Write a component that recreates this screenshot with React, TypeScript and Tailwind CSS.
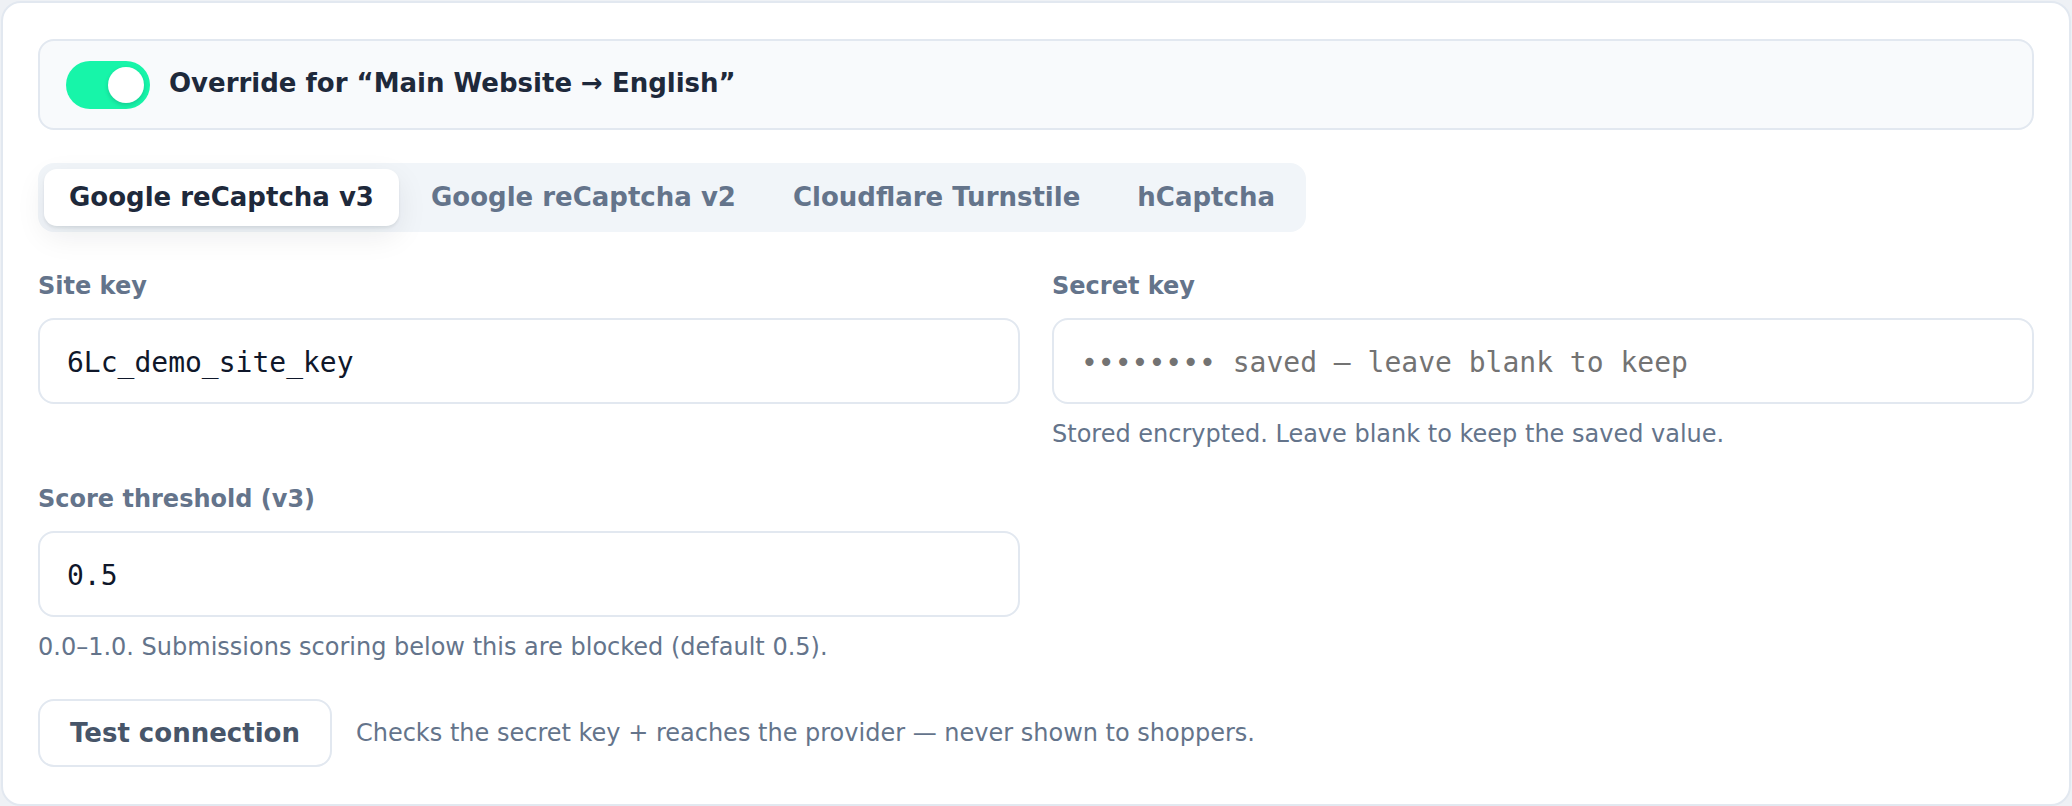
import { useState } from "react";

const tabs = ["Google reCaptcha v3", "Google reCaptcha v2", "Cloudflare Turnstile", "hCaptcha"];

/** Labelled text field with an optional hint underneath */
const Field = ({
	label,
	value,
	placeholder,
	hint,
}: {
	label: string;
	value?: string;
	placeholder?: string;
	hint?: string;
}) => (
	<div className="flex flex-col">
		<label className="mb-[16px] text-[24px] leading-[32px] font-bold text-[#64748b]">{label}</label>
		<input
			readOnly
			defaultValue={value}
			placeholder={placeholder}
			className="h-[86px] w-full rounded-[16px] border-2 border-[#e2e8f0] bg-white pt-[3px] pl-[27px] font-['DejaVu_Sans_Mono',monospace] text-[28px] text-[#0f172a] outline-none placeholder:text-[#737373]"
		/>
		{hint && <p className="mt-[12px] text-[24px] leading-[36px] text-[#64748b]">{hint}</p>}
	</div>
);

/** Captcha provider settings for one store view */
const App = () => {
	const [enabled, setEnabled] = useState(true);
	const [active, setActive] = useState(0);

	return (
		<div className="min-h-screen bg-[#eef1f5] p-px font-['DejaVu_Sans',sans-serif]">
			<div className="rounded-[20px] border-2 border-[#e2e8f0] bg-white px-[35px] pt-[36px] pb-[37px]">
				{/* Override switch */}
				<div className="flex h-[91px] items-center gap-[19px] rounded-[16px] border-2 border-[#e2e8f0] bg-[#f8fafc] pl-[26px]">
					<button
						type="button"
						onClick={() => setEnabled(!enabled)}
						className={`flex h-[48px] w-[84px] shrink-0 items-center rounded-full px-[6px] ${enabled ? "justify-end bg-[#17f5a9]" : "justify-start bg-[#cbd5e1]"}`}
					>
						<span className="h-[36px] w-[36px] rounded-full bg-white shadow-[0_2px_4px_rgba(15,23,42,0.18)]" />
					</button>
					<span className="pb-[2px] text-[26px] font-bold text-[#1e293b]">Override for “Main Website → English”</span>
				</div>

				{/* Provider tabs */}
				<div className="mt-[33px] flex h-[69px] w-fit items-center gap-[7px] rounded-[16px] bg-[#f1f5f9] p-[6px]">
					{tabs.map((tab, i) => (
						<button
							key={tab}
							type="button"
							onClick={() => setActive(i)}
							className={`h-[57px] rounded-[13px] px-[25px] text-[26px] font-bold ${active === i ? "bg-white text-[#1e293b] shadow-[0_2px_3px_rgba(15,23,42,0.08),0_10px_30px_rgba(15,23,42,0.08)]" : "text-[#64748b]"}`}
						>
							{tab}
						</button>
					))}
				</div>

				{/* Keys */}
				<div className="mt-[38px] grid grid-cols-2 gap-x-[32px] gap-y-[31px]">
					<Field label="Site key" value="6Lc_demo_site_key" />
					<Field
						label="Secret key"
						placeholder="•••••••• saved — leave blank to keep"
						hint="Stored encrypted. Leave blank to keep the saved value."
					/>
					<Field
						label="Score threshold (v3)"
						value="0.5"
						hint="0.0–1.0. Submissions scoring below this are blocked (default 0.5)."
					/>
				</div>

				{/* Connection check */}
				<div className="mt-[34px] flex items-center gap-[24px]">
					<button
						type="button"
						className="h-[68px] rounded-[16px] border-2 border-[#e2e8f0] bg-white px-[30px] text-[26px] font-bold text-[#475569]"
					>
						Test connection
					</button>
					<span className="text-[24px] text-[#64748b]">
						Checks the secret key + reaches the provider — never shown to shoppers.
					</span>
				</div>
			</div>
		</div>
	);
};

export default App;
